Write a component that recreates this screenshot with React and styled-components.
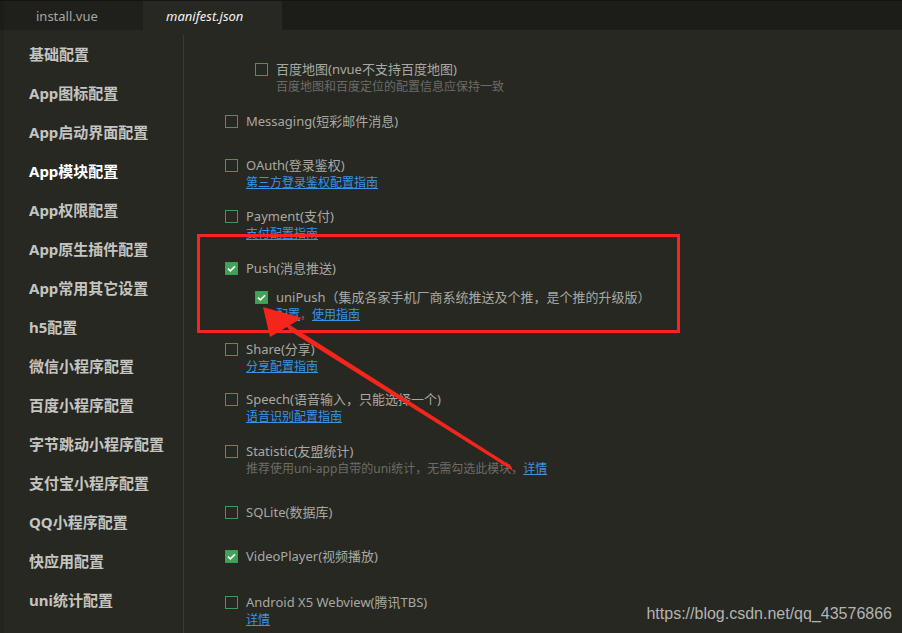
import React from 'react'
import styled, { createGlobalStyle } from 'styled-components'

const GlobalStyle = createGlobalStyle`
  html, body {
    margin: 0;
    padding: 0;
    background: #272822;
  }
  body {
    font-family: "Noto Sans", "Noto Sans CJK SC", sans-serif;
  }
`

const menu = [
  '基础配置',
  'App图标配置',
  'App启动界面配置',
  'App模块配置',
  'App权限配置',
  'App原生插件配置',
  'App常用其它设置',
  'h5配置',
  '微信小程序配置',
  '百度小程序配置',
  '字节跳动小程序配置',
  '支付宝小程序配置',
  'QQ小程序配置',
  '快应用配置',
  'uni统计配置',
]

const Check = ({ checked }) => (
  <Check.Box $checked={checked}>
    {checked && (
      <svg width='9' height='7' viewBox='0 0 9 7'>
        <path d='M1 3.6 L3.4 5.8 L8 1.2' fill='none' stroke='#fff' strokeWidth='1.6' />
      </svg>
    )}
  </Check.Box>
)

Check.Box = styled.span`
  display: flex;
  align-items: center;
  justify-content: center;
  box-sizing: border-box;
  width: 13px;
  height: 13px;
  flex-shrink: 0;
  border: 1px solid #3d9c51;
  background: ${p => (p.$checked ? '#40a357' : 'transparent')};
`

// space = distance below the block before the next module
const Module = ({ label, checked, nested, space = 14, children }) => (
  <Module.Wrap $nested={nested} $space={space}>
    <Module.Row>
      <Check checked={checked} />
      <Module.Label>{label}</Module.Label>
    </Module.Row>
    {children}
  </Module.Wrap>
)

Module.Wrap = styled.div`
  display: flex;
  flex-direction: column;
  margin-left: ${p => (p.$nested ? '30px' : '0')};
  margin-bottom: ${p => p.$space}px;
`

Module.Row = styled.div`
  display: flex;
  align-items: center;
  gap: 8px;
  height: 18px;
`

Module.Label = styled.span`
  font-size: 13px;
  line-height: 18px;
  color: #a8a8a2;
  white-space: nowrap;
`

const SubLine = styled.div`
  margin-left: 21px;
  height: 18px;
  line-height: 18px;
  font-size: 12px;
  color: #6c6c66;
  white-space: nowrap;
`

const Link = styled.a`
  color: #3a93e4;
  text-decoration: underline;
  cursor: pointer;
`

const App = () => (
  <Page>
    <GlobalStyle />
    <TabBar>
      <Tab>install.vue</Tab>
      <Tab $active>manifest.json</Tab>
    </TabBar>
    <Main>
      <Gutter />
      <Sidebar>
        {menu.map(item => (
          <MenuItem key={item} $active={item === 'App模块配置'}>{item}</MenuItem>
        ))}
      </Sidebar>
      <Content>
        <Module nested label='百度地图(nvue不支持百度地图)' space={16}>
          <SubLine>百度地图和百度定位的配置信息应保持一致</SubLine>
        </Module>
        <Module label='Messaging(短彩邮件消息)' space={26} />
        <Module label='OAuth(登录鉴权)' space={15}>
          <SubLine><Link>第三方登录鉴权配置指南</Link></SubLine>
        </Module>
        <Module label='Payment(支付)' space={16}>
          <SubLine><Link>支付配置指南</Link></SubLine>
        </Module>
        <Module label='Push(消息推送)' checked space={16}>
          <Gap />
          <Module nested checked label='uniPush（集成各家手机厂商系统推送及个推，是个推的升级版）' space={0}>
            <SubLine><Link>配置</Link>，<Link>使用指南</Link></SubLine>
          </Module>
        </Module>
        <Module label='Share(分享)' space={14}>
          <SubLine><Link>分享配置指南</Link></SubLine>
        </Module>
        <Module label='Speech(语音输入，只能选择一个)' space={16}>
          <SubLine><Link>语音识别配置指南</Link></SubLine>
        </Module>
        <Module label='Statistic(友盟统计)' space={25}>
          <SubLine>推荐使用uni-app自带的uni统计，无需勾选此模块，<Link>详情</Link></SubLine>
        </Module>
        <Module label='SQLite(数据库)' space={26} />
        <Module label='VideoPlayer(视频播放)' checked space={28} />
        <Module label='Android X5 Webview(腾讯TBS)'>
          <SubLine><Link>详情</Link></SubLine>
        </Module>
      </Content>
    </Main>

    <Highlight />
    <Arrow width='902' height='633' viewBox='0 0 902 633'>
      <polygon points='263,307 270,337 302,318' fill='#f4261c' />
      <polygon points='282,320 290,331 513,471 511,466' fill='#f4261c' />
    </Arrow>
    <Watermark>https://blog.csdn.net/qq_43576866</Watermark>
  </Page>
)

const Page = styled.div`
  position: relative;
  display: flex;
  flex-direction: column;
  width: 902px;
  height: 633px;
  overflow: hidden;
  background: #272822;
`

const TabBar = styled.div`
  display: flex;
  flex-shrink: 0;
  height: 30px;
  box-sizing: border-box;
  padding-left: 4px;
  background: #1c1d19;
  border-top: 1px solid #141513;
`

const Tab = styled.div`
  display: flex;
  align-items: center;
  width: 139px;
  padding-left: ${p => (p.$active ? '23px' : '32px')};
  box-sizing: border-box;
  font-size: 13px;
  font-style: ${p => (p.$active ? 'italic' : 'normal')};
  color: ${p => (p.$active ? '#f2f2f2' : '#a6a6a0')};
  background: ${p => (p.$active ? '#272822' : '#1f201c')};
`

const Main = styled.div`
  display: flex;
  flex: 1;
  min-height: 0;
`

const Gutter = styled.div`
  width: 4px;
  flex-shrink: 0;
  background: #24241f;
`

const Sidebar = styled.div`
  display: flex;
  flex-direction: column;
  width: 179px;
  flex-shrink: 0;
  margin-top: 5px;
  border-right: 1px solid #3b3b36;
`

const MenuItem = styled.div`
  height: 39px;
  line-height: 39px;
  padding-left: 25px;
  font-size: 15px;
  font-weight: bold;
  white-space: nowrap;
  color: ${p => (p.$active ? '#ffffff' : '#c4c4c0')};
`

const Content = styled.div`
  display: flex;
  flex-direction: column;
  flex: 1;
  padding: 30px 0 0 41px;
`

const Gap = styled.div`
  height: 11px;
`

const Highlight = styled.div`
  position: absolute;
  left: 197px;
  top: 234px;
  width: 483px;
  height: 99px;
  box-sizing: border-box;
  border: 3px solid #fb2320;
  pointer-events: none;
`

const Arrow = styled.svg`
  position: absolute;
  left: 0;
  top: 0;
  pointer-events: none;
`

const Watermark = styled.div`
  position: absolute;
  right: 10px;
  bottom: 10px;
  font-family: "Liberation Sans", Arial, sans-serif;
  font-size: 16px;
  color: #b4b4b0;
`

export default App
